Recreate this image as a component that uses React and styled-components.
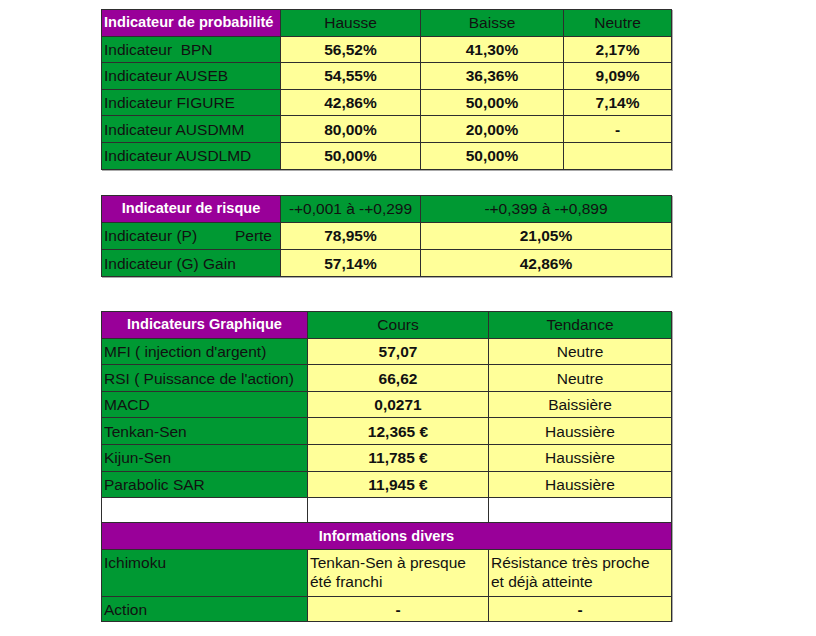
import React from 'react'
import styled, { createGlobalStyle } from 'styled-components'

const GREEN = '#009933'
const PURPLE = '#990099'
const YELLOW = '#ffff99'

const Global = createGlobalStyle`
  html, body { margin: 0; padding: 0; background: #fff; }
  body { font-family: "Liberation Sans", Arial, sans-serif; }
`

const Page = styled.div`
  display: flex;
  flex-direction: column;
  padding: 9px 0 0 101px;
  width: 570px;
`

const Table = styled.table`
  width: 570px;
  table-layout: fixed;
  border-collapse: collapse;
  box-shadow: 1px 1px 0 #aaa;
  margin-bottom: ${(p) => p.$gap || 0}px;
  font-size: 15.5px;
  color: #111;
`

const Row = styled.tr`
  height: ${(p) => p.$h || 26.6}px;
`

const Cell = styled.td`
  border: 1px solid #2e2e2e;
  padding: ${(p) => (p.$top ? '3px 2px 0' : '0 2px')};
  vertical-align: ${(p) => (p.$top ? 'top' : 'middle')};
  text-align: ${(p) => (p.$center ? 'center' : 'left')};
  line-height: 19px;
  white-space: nowrap;
  overflow: hidden;
  background: ${(p) =>
    p.$tone === 'purple' ? PURPLE : p.$tone === 'green' ? GREEN : p.$tone === 'white' ? '#fff' : YELLOW};
  color: ${(p) => (p.$tone === 'purple' ? '#fff' : '#111')};
  font-size: ${(p) => (p.$tone === 'purple' ? '14.6px' : 'inherit')};
  font-weight: ${(p) => (p.$bold || p.$tone === 'purple' ? 700 : 400)};
`

const Split = styled.div`
  display: flex;
  justify-content: space-between;
  padding-right: 6px;
`

const Head = ({ children, purple, span, left }) => (
  <Cell as="th" colSpan={span} $tone={purple ? 'purple' : 'green'} $center={!left}>
    {children}
  </Cell>
)

const Label = ({ children, top }) => (
  <Cell $tone="green" $top={top}>{children}</Cell>
)

const Value = ({ children, span, bold = true }) => (
  <Cell colSpan={span} $center $bold={bold}>{children}</Cell>
)

const proba = [
  ['Indicateur\u00a0 BPN', '56,52%', '41,30%', '2,17%'],
  ['Indicateur AUSEB', '54,55%', '36,36%', '9,09%'],
  ['Indicateur FIGURE', '42,86%', '50,00%', '7,14%'],
  ['Indicateur AUSDMM', '80,00%', '20,00%', '-'],
  ['Indicateur AUSDLMD', '50,00%', '50,00%', ''],
]

const graph = [
  ['MFI ( injection d\'argent)', '57,07', 'Neutre'],
  ['RSI ( Puissance de l\'action)', '66,62', 'Neutre'],
  ['MACD', '0,0271', 'Baissière'],
  ['Tenkan-Sen', '12,365 €', 'Haussière'],
  ['Kijun-Sen', '11,785 €', 'Haussière'],
  ['Parabolic SAR', '11,945 €', 'Haussière'],
]

export default function App() {
  return (
    <Page>
      <Global />
      <Table $gap={25}>
        <colgroup>
          <col style={{ width: 179 }} />
          <col style={{ width: 140 }} />
          <col style={{ width: 143 }} />
          <col style={{ width: 108 }} />
        </colgroup>
        <tbody>
          <Row>
            <Head purple left>Indicateur de probabilité</Head>
            <Head>Hausse</Head>
            <Head>Baisse</Head>
            <Head>Neutre</Head>
          </Row>
          {proba.map((r) => (
            <Row key={r[0]}>
              <Label>{r[0]}</Label>
              <Value>{r[1]}</Value>
              <Value>{r[2]}</Value>
              <Value>{r[3]}</Value>
            </Row>
          ))}
        </tbody>
      </Table>

      <Table $gap={34}>
        <colgroup>
          <col style={{ width: 179 }} />
          <col style={{ width: 140 }} />
          <col style={{ width: 251 }} />
        </colgroup>
        <tbody>
          <Row $h={27}>
            <Head purple>Indicateur de risque</Head>
            <Head>-+0,001 à -+0,299</Head>
            <Head>-+0,399 à -+0,899</Head>
          </Row>
          <Row $h={27.5}>
            <Label>
              <Split>
                <span>Indicateur (P)</span>
                <span>Perte</span>
              </Split>
            </Label>
            <Value>78,95%</Value>
            <Value>21,05%</Value>
          </Row>
          <Row $h={27}>
            <Label>Indicateur (G) Gain</Label>
            <Value>57,14%</Value>
            <Value>42,86%</Value>
          </Row>
        </tbody>
      </Table>

      <Table>
        <colgroup>
          <col style={{ width: 206 }} />
          <col style={{ width: 181 }} />
          <col style={{ width: 183 }} />
        </colgroup>
        <tbody>
          <Row>
            <Head purple>Indicateurs Graphique</Head>
            <Head>Cours</Head>
            <Head>Tendance</Head>
          </Row>
          {graph.map((r) => (
            <Row key={r[0]}>
              <Label>{r[0]}</Label>
              <Value>{r[1]}</Value>
              <Value bold={false}>{r[2]}</Value>
            </Row>
          ))}
          <Row $h={25}>
            <Cell $tone="white" />
            <Cell $tone="white" />
            <Cell $tone="white" />
          </Row>
          <Row $h={27}>
            <Head purple span={3}>Informations divers</Head>
          </Row>
          <Row $h={47}>
            <Label top>Ichimoku</Label>
            <Cell $top>Tenkan-Sen à presque<br />été franchi</Cell>
            <Cell $top>Résistance très proche<br />et déjà atteinte</Cell>
          </Row>
          <Row $h={25}>
            <Label>Action</Label>
            <Value>-</Value>
            <Value>-</Value>
          </Row>
        </tbody>
      </Table>
    </Page>
  )
}
